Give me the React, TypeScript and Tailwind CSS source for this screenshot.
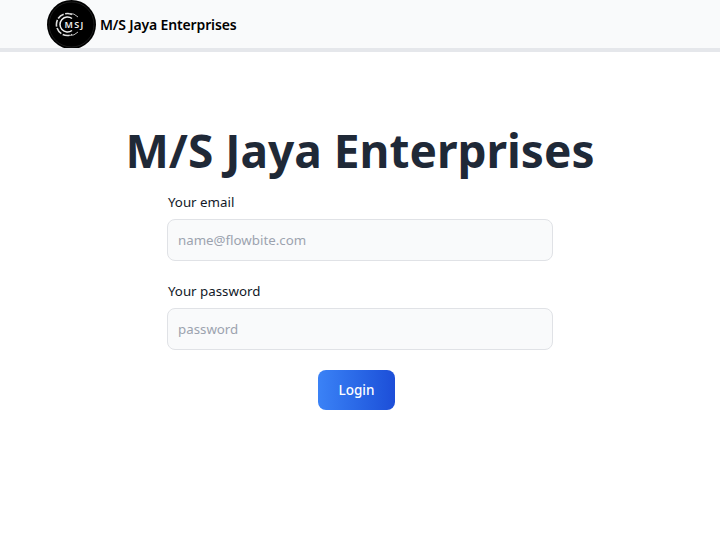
export default function App() {
  const font = "font-['Noto_Sans','Open_Sans',sans-serif]";
  return (
    <div className={`min-h-[540px] bg-white ${font}`}>
      <nav className="h-[52px] bg-[#f9fafb] border-b-4 border-[#e5e7eb] flex items-center pl-[47px] overflow-hidden">
        <svg width="49" height="49" viewBox="0 0 49 49" className="shrink-0">
          <circle cx="24.5" cy="24.5" r="24.5" fill="#000" />
          <circle cx="24.5" cy="24.5" r="22.5" fill="none" stroke="#1c1c1c" strokeWidth="1" />
          <path d="M25 14.5A11 11 0 1 0 25 34.5" fill="none" stroke="#ddd" strokeWidth="1.6" strokeDasharray="7 1.5" />
          <path d="M25 18.5A7.5 7.5 0 1 0 25 30.5" fill="none" stroke="#f0f0f0" strokeWidth="1.5" />
          <path d="M22 13.5A11 11 0 0 1 31 17M22 35.5A11 11 0 0 0 31 32" fill="none" stroke="#bbb" strokeWidth="1" />
          <text x="17.5" y="28" fontSize="9" fontWeight="600" letterSpacing="1.3" fill="#eee" fontFamily="Noto Sans">MSJ</text>
        </svg>
        <span className="ml-[4px] mt-[1px] text-[14px] font-semibold text-black leading-5 tracking-[-0.15px]">M/S Jaya Enterprises</span>
      </nav>
      <main className="flex flex-col items-center pt-[68px]">
        <h1 className="text-[46px] font-bold leading-[60px] text-[#1f2937]">M/S Jaya Enterprises</h1>
        <form className="w-[386px] mt-[12px] flex flex-col">
          <label className="pl-[1px] text-[13.3px] leading-5 text-[#111827] mb-[7px]">Your email</label>
          <input
            placeholder="name@flowbite.com"
            className="h-[42px] rounded-lg border border-[#e0e2e6] bg-[#f9fafb] px-[10px] text-[13.3px] placeholder:text-[#9ca3af] mb-[20px]"
          />
          <label className="pl-[1px] text-[13.3px] leading-5 text-[#111827] mb-[7px]">Your password</label>
          <input
            placeholder="password"
            className="h-[42px] rounded-lg border border-[#e0e2e6] bg-[#f9fafb] px-[10px] text-[13.3px] placeholder:text-[#9ca3af] mb-[20px]"
          />
          <button
            type="button"
            className="self-center w-[77px] h-[40px] ml-[-7px] rounded-lg bg-gradient-to-r from-[#3b82f6] to-[#1d4ed8] text-white text-[13.5px] font-medium"
          >
            Login
          </button>
        </form>
      </main>
    </div>
  );
}
